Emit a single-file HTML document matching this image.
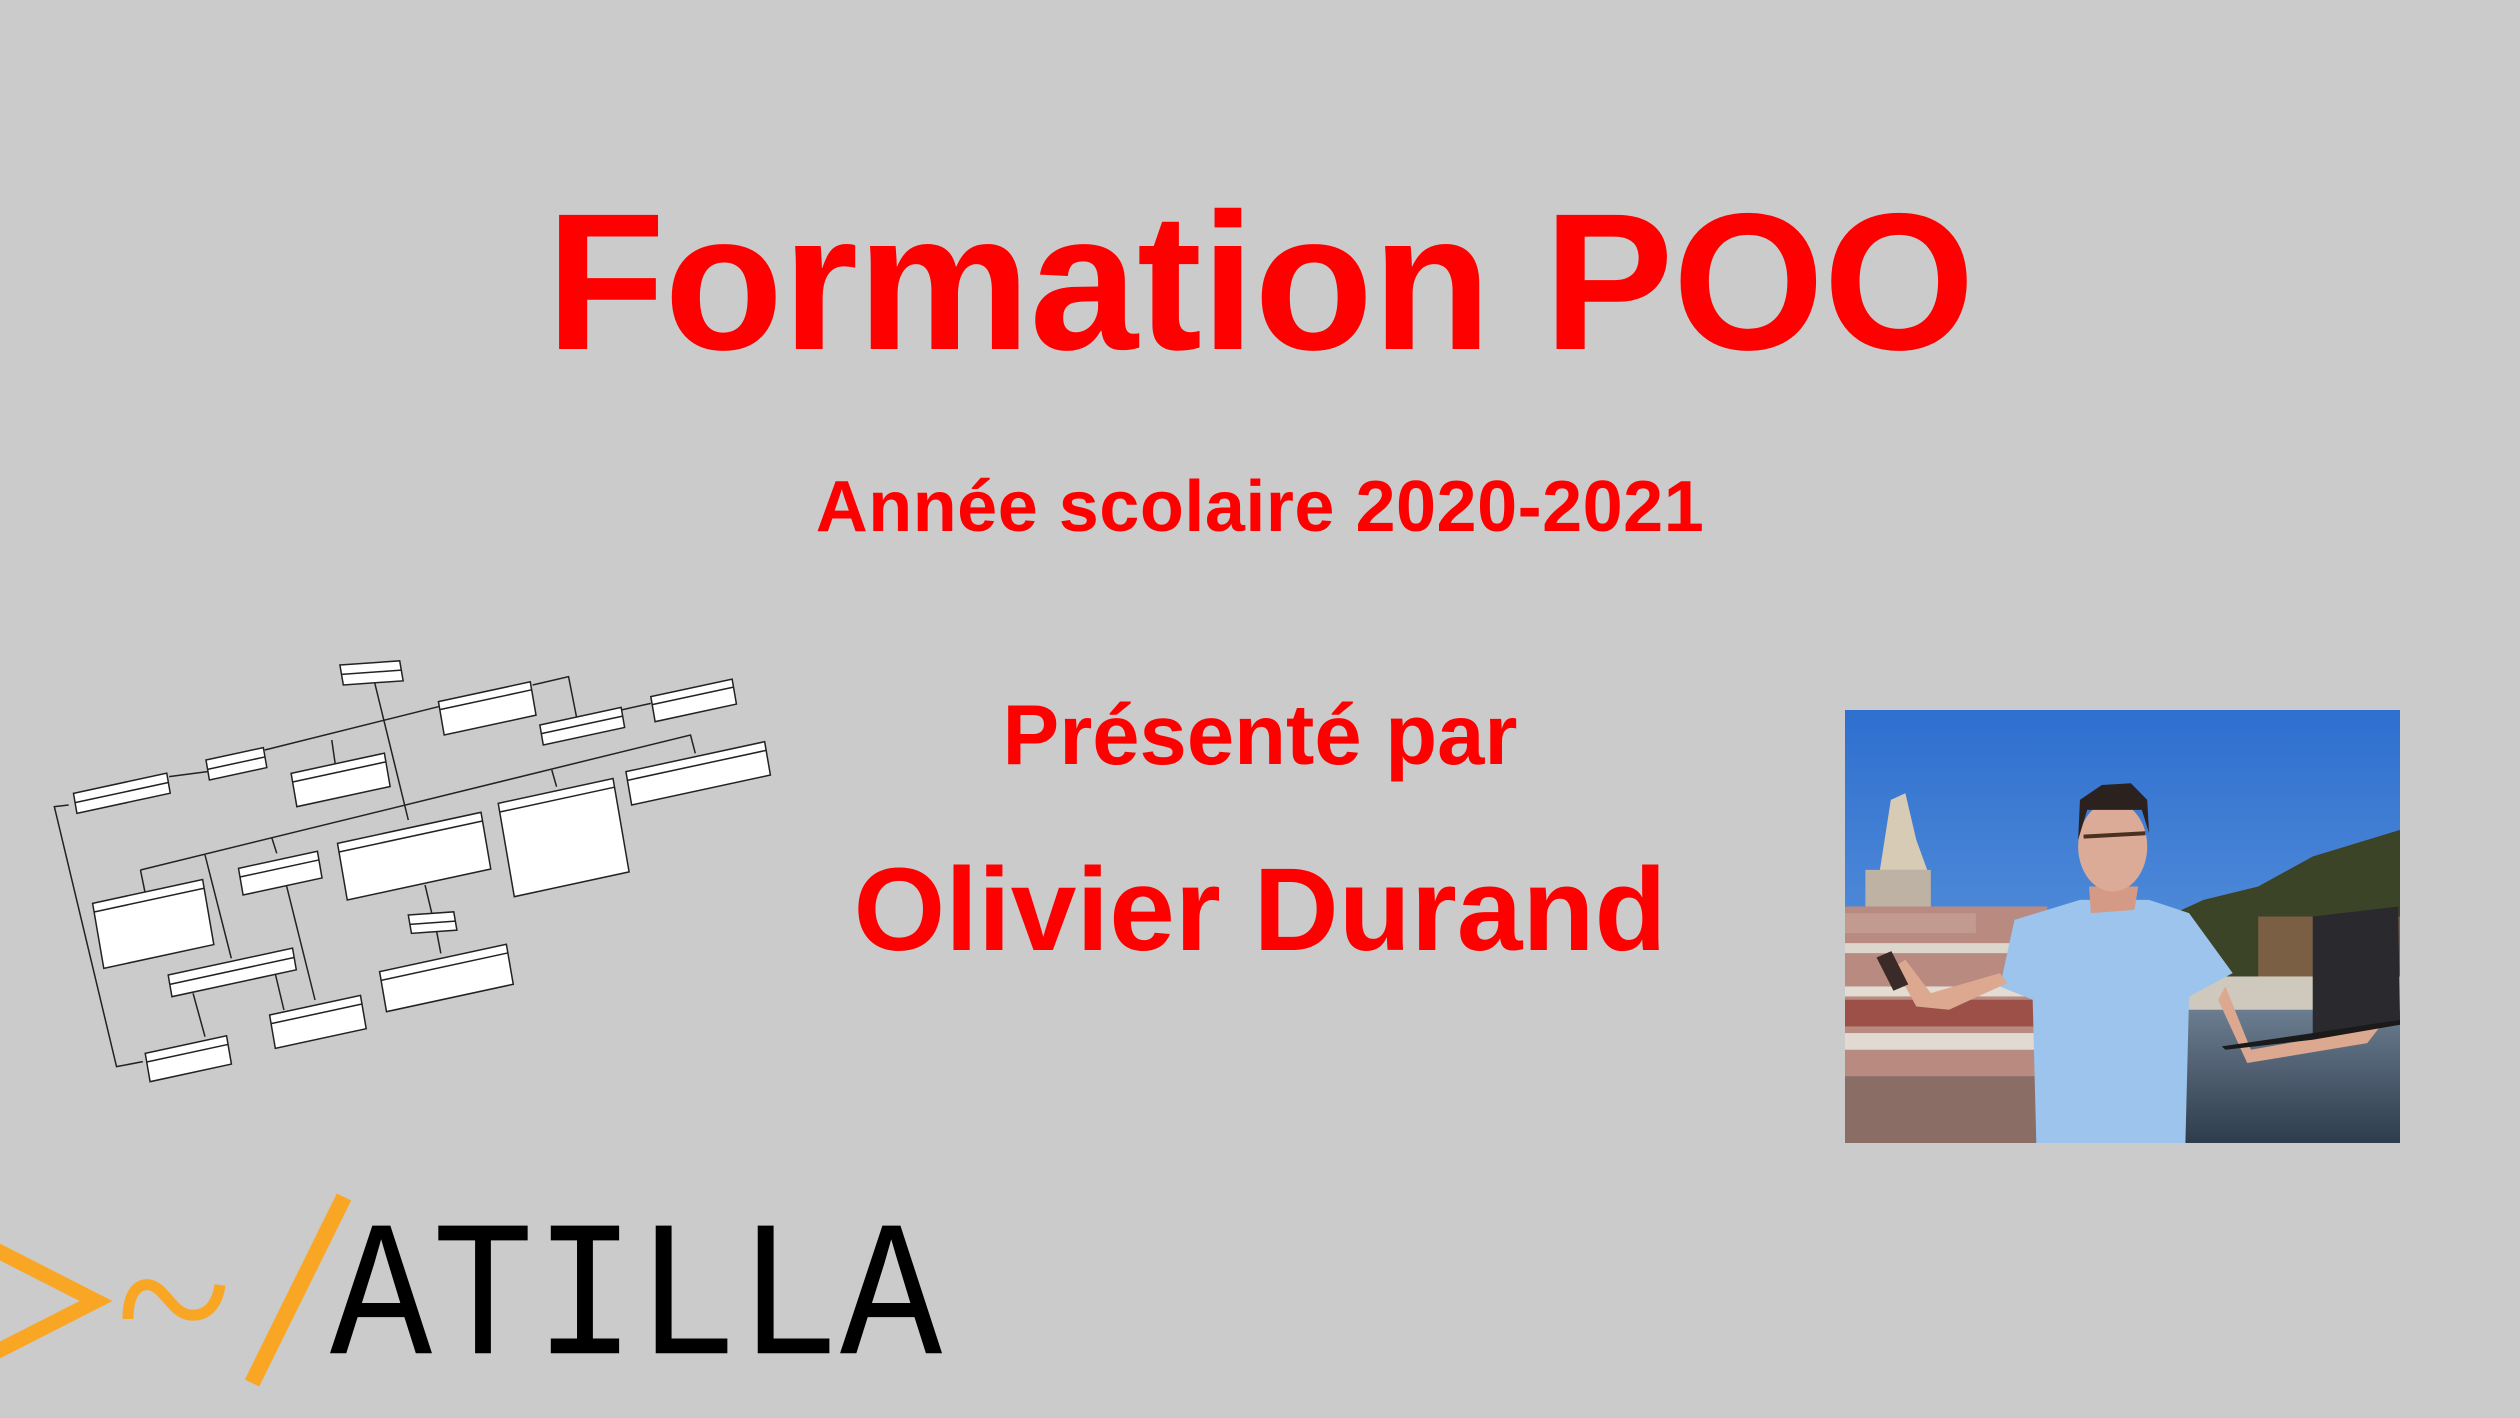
<!DOCTYPE html>
<html><head><meta charset="utf-8"><style>
html,body{margin:0;padding:0}
body{width:2520px;height:1418px;background:#cbcbcb;position:relative;overflow:hidden;font-family:"Liberation Sans",sans-serif}
.t{position:absolute;left:0;width:2520px;text-align:center;color:#ff0000;font-weight:bold;line-height:1;white-space:nowrap}
</style></head><body>
<div class="t" style="top:185px;font-size:195px;letter-spacing:-1px">Formation POO</div>
<div class="t" style="top:471px;font-size:72px;letter-spacing:0.5px">Année scolaire 2020-2021</div>
<div class="t" style="top:693px;font-size:85px">Présenté par</div>
<div class="t" style="top:851px;font-size:118px">Olivier Durand</div>

<!-- UML diagram -->
<svg style="position:absolute;left:40px;top:640px" width="750" height="450" viewBox="0 0 1568 1350" preserveAspectRatio="none">
<g fill="none" stroke="#222" stroke-width="1.5">
<path d="M700 130 L770 540" vector-effect="non-scaling-stroke"/>
<path d="M470 330 L833 200" vector-effect="non-scaling-stroke"/>
<path d="M270 410 L350 395" vector-effect="non-scaling-stroke"/>
<path d="M610 300 L620 400" vector-effect="non-scaling-stroke"/>
<path d="M1030 135 L1105 110 L1125 255" vector-effect="non-scaling-stroke"/>
<path d="M1215 210 L1277 190" vector-effect="non-scaling-stroke"/>
<path d="M210 690 L1360 285 L1370 340" vector-effect="non-scaling-stroke"/>
<path d="M210 690 L225 795" vector-effect="non-scaling-stroke"/>
<path d="M345 645 L400 955" vector-effect="non-scaling-stroke"/>
<path d="M485 595 L495 640" vector-effect="non-scaling-stroke"/>
<path d="M1070 390 L1080 440" vector-effect="non-scaling-stroke"/>
<path d="M515 735 L575 1080" vector-effect="non-scaling-stroke"/>
<path d="M490 990 L510 1110" vector-effect="non-scaling-stroke"/>
<path d="M805 735 L820 825" vector-effect="non-scaling-stroke"/>
<path d="M828 865 L838 940" vector-effect="non-scaling-stroke"/>
<path d="M320 1060 L345 1190" vector-effect="non-scaling-stroke"/>
<path d="M60 495 L30 500 L160 1280 L215 1265" vector-effect="non-scaling-stroke"/>
</g>
<g fill="#fff" stroke="#222" stroke-width="1.5">
<g transform="translate(627,75) matrix(1,-0.1,0.12,1,0,0)"><rect width="125" height="60" vector-effect="non-scaling-stroke"/><line x1="0" y1="28" x2="125" y2="28" vector-effect="non-scaling-stroke"/></g>
<g transform="translate(833,185) matrix(1,-0.31,0.12,1,0,0)"><rect width="192" height="100" vector-effect="non-scaling-stroke"/><line x1="0" y1="24" x2="192" y2="24" vector-effect="non-scaling-stroke"/></g>
<g transform="translate(1045,255) matrix(1,-0.31,0.12,1,0,0)"><rect width="170" height="60" vector-effect="non-scaling-stroke"/><line x1="0" y1="26" x2="170" y2="26" vector-effect="non-scaling-stroke"/></g>
<g transform="translate(1277,170) matrix(1,-0.31,0.12,1,0,0)"><rect width="170" height="75" vector-effect="non-scaling-stroke"/><line x1="0" y1="24" x2="170" y2="24" vector-effect="non-scaling-stroke"/></g>
<g transform="translate(347,360) matrix(1,-0.31,0.12,1,0,0)"><rect width="120" height="60" vector-effect="non-scaling-stroke"/><line x1="0" y1="28" x2="120" y2="28" vector-effect="non-scaling-stroke"/></g>
<g transform="translate(525,400) matrix(1,-0.31,0.12,1,0,0)"><rect width="195" height="100" vector-effect="non-scaling-stroke"/><line x1="0" y1="26" x2="195" y2="26" vector-effect="non-scaling-stroke"/></g>
<g transform="translate(70,460) matrix(1,-0.31,0.12,1,0,0)"><rect width="195" height="60" vector-effect="non-scaling-stroke"/><line x1="0" y1="28" x2="195" y2="28" vector-effect="non-scaling-stroke"/></g>
<g transform="translate(1225,395) matrix(1,-0.31,0.12,1,0,0)"><rect width="290" height="100" vector-effect="non-scaling-stroke"/><line x1="0" y1="26" x2="290" y2="26" vector-effect="non-scaling-stroke"/></g>
<g transform="translate(958,490) matrix(1,-0.31,0.12,1,0,0)"><rect width="240" height="280" vector-effect="non-scaling-stroke"/><line x1="0" y1="26" x2="240" y2="26" vector-effect="non-scaling-stroke"/></g>
<g transform="translate(622,610) matrix(1,-0.31,0.12,1,0,0)"><rect width="300" height="170" vector-effect="non-scaling-stroke"/><line x1="0" y1="26" x2="300" y2="26" vector-effect="non-scaling-stroke"/></g>
<g transform="translate(415,685) matrix(1,-0.31,0.12,1,0,0)"><rect width="165" height="80" vector-effect="non-scaling-stroke"/><line x1="0" y1="26" x2="165" y2="26" vector-effect="non-scaling-stroke"/></g>
<g transform="translate(110,790) matrix(1,-0.31,0.12,1,0,0)"><rect width="230" height="195" vector-effect="non-scaling-stroke"/><line x1="0" y1="26" x2="230" y2="26" vector-effect="non-scaling-stroke"/></g>
<g transform="translate(268,1005) matrix(1,-0.31,0.12,1,0,0)"><rect width="260" height="65" vector-effect="non-scaling-stroke"/><line x1="0" y1="28" x2="260" y2="28" vector-effect="non-scaling-stroke"/></g>
<g transform="translate(770,825) matrix(1,-0.1,0.12,1,0,0)"><rect width="95" height="55" vector-effect="non-scaling-stroke"/><line x1="0" y1="28" x2="95" y2="28" vector-effect="non-scaling-stroke"/></g>
<g transform="translate(710,995) matrix(1,-0.31,0.12,1,0,0)"><rect width="265" height="120" vector-effect="non-scaling-stroke"/><line x1="0" y1="26" x2="265" y2="26" vector-effect="non-scaling-stroke"/></g>
<g transform="translate(480,1125) matrix(1,-0.31,0.12,1,0,0)"><rect width="190" height="100" vector-effect="non-scaling-stroke"/><line x1="0" y1="26" x2="190" y2="26" vector-effect="non-scaling-stroke"/></g>
<g transform="translate(220,1240) matrix(1,-0.31,0.12,1,0,0)"><rect width="170" height="85" vector-effect="non-scaling-stroke"/><line x1="0" y1="26" x2="170" y2="26" vector-effect="non-scaling-stroke"/></g>
</g>
</svg>

<!-- Photo -->
<svg style="position:absolute;left:1845px;top:710px" width="555" height="433" viewBox="14 30 1526 1300" preserveAspectRatio="none">
<defs>
<linearGradient id="sky" x1="0" y1="0" x2="0" y2="1"><stop offset="0" stop-color="#2e6fcf"/><stop offset="0.5" stop-color="#4f8ad8"/><stop offset="1" stop-color="#8db7e6"/></linearGradient>
<linearGradient id="wat" x1="0" y1="0" x2="0" y2="1"><stop offset="0" stop-color="#6b7d90"/><stop offset="1" stop-color="#2e3c4c"/></linearGradient>
</defs>
<rect x="14" y="30" width="1526" height="1300" fill="url(#sky)"/>
<path d="M900 650 L1000 600 L1150 560 L1300 470 L1450 420 L1540 390 L1540 930 L900 930Z" fill="#3b4426"/>
<rect x="1150" y="650" width="390" height="190" fill="#7a5f44"/>
<rect x="900" y="830" width="640" height="110" fill="#cfc8bc"/>
<rect x="14" y="930" width="1526" height="400" fill="url(#wat)"/>
<path d="M14 620 L570 620 L570 1130 L14 1130Z" fill="#b88a80"/>
<rect x="14" y="640" width="360" height="60" fill="#c39a8f"/>
<rect x="14" y="730" width="460" height="30" fill="#ddd6cc"/>
<rect x="14" y="860" width="520" height="30" fill="#e2dcd3"/>
<rect x="14" y="900" width="520" height="80" fill="#9c5048"/>
<rect x="14" y="1000" width="560" height="50" fill="#e0dad2"/>
<rect x="14" y="1130" width="540" height="200" fill="#8a6e66"/>
<rect x="70" y="510" width="180" height="110" fill="#bdb2a4"/>
<path d="M110 510 L140 300 L180 280 L210 420 L240 510Z" fill="#d8cbb5"/>
<path d="M480 660 L660 600 L850 600 L960 640 L1080 820 L960 890 L950 1330 L540 1330 L530 900 L440 860Z" fill="#9cc4ec"/>
<path d="M460 850 L300 930 L210 920 L150 800 L180 780 L250 880 L440 820Z" fill="#dca890"/>
<path d="M1060 860 L1130 1050 L1440 990 L1460 880 L1500 960 L1450 1030 L1120 1090 L1040 900Z" fill="#dca890"/>
<rect x="120" y="760" width="45" height="110" fill="#3a2a28" transform="rotate(-25 140 810)"/>
<path d="M1300 650 L1535 620 L1540 960 L1300 1005Z" fill="#2a2a2e"/>
<path d="M1050 1040 L1300 1000 L1540 960 L1540 975 L1300 1020 L1060 1050Z" fill="#1a1a1a"/>
<path d="M685 560 L690 640 L810 630 L820 560Z" fill="#d49a86"/>
<ellipse cx="750" cy="440" rx="95" ry="135" fill="#dcab97"/>
<path d="M655 420 L660 300 L720 255 L800 250 L845 300 L850 400 L830 330 L680 330Z" fill="#2b2220"/>
<path d="M670 410 L840 400" stroke="#4a3020" stroke-width="12" fill="none"/>
</svg>

<!-- ATILLA logo -->
<svg style="position:absolute;left:0;top:1180px" width="360" height="220" viewBox="0 1180 360 220">
<path d="M-10 1247 L96 1301 L-10 1355" fill="none" stroke="#faa625" stroke-width="15"/>
<path d="M128 1319 C128 1290 140 1283 150 1285 C165 1288 172 1313 190 1315 C210 1317 218 1300 220 1285" fill="none" stroke="#faa625" stroke-width="11"/>
<path d="M344 1197 L252 1383" fill="none" stroke="#faa625" stroke-width="16"/>
</svg>
<div style="position:absolute;left:330px;top:1230px;font-family:'Liberation Mono',monospace;font-size:170px;line-height:170px;color:#000;white-space:nowrap;transform:scaleY(1.14);transform-origin:0 100%;height:170px">ATILLA</div>
</body></html>
